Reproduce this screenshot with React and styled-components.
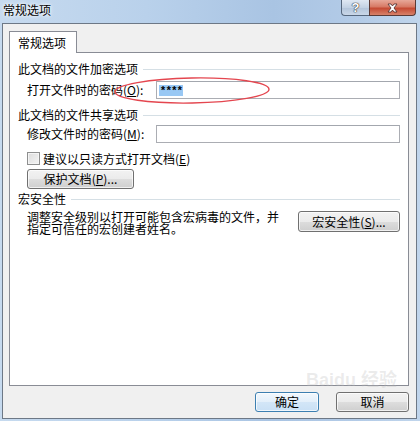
import React from "react";
import styled, { createGlobalStyle } from "styled-components";

const GlobalStyle = createGlobalStyle`
  body {
    margin: 0;
    font-family: "Noto Sans CJK SC", "Liberation Sans", sans-serif;
    font-size: 12px;
    color: #000;
  }
`;

const Window = styled.div`
  position: relative;
  width: 420px;
  height: 421px;
  display: flex;
  flex-direction: column;
  overflow: hidden;
  background: linear-gradient(
    90deg,
    #c6daef 0%,
    #b9d1eb 35%,
    #a9c4e3 65%,
    #b3cbe7 85%,
    #c0d5ec 100%
  );
`;

const TitleBar = styled.div`
  height: 23px;
  flex: none;
  display: flex;
  justify-content: space-between;
  align-items: flex-start;
  padding-left: 3px;
`;

const Title = styled.span`
  margin-top: 4px;
  font-size: 12px;
  line-height: 12px;
  text-shadow: 0 0 5px #fff, 0 0 3px #fff;
`;

const CaptionButtons = styled.div`
  display: flex;
  margin-right: 4px;
`;

const HelpButton = styled.div`
  width: 27px;
  height: 15px;
  border: 1px solid #56687e;
  border-top: none;
  border-right: none;
  border-radius: 0 0 0 4px;
  background: linear-gradient(#dfe8f3, #c3d2e4 50%, #b2c4da 51%, #c9d7e8);
  display: flex;
  justify-content: center;
  align-items: center;
  color: #fff;
  font-family: "Liberation Sans", sans-serif;
  font-weight: bold;
  font-size: 13px;
  line-height: 13px;
  text-shadow: 0 0 1px #333, 0 0 1px #333, 0 0 1px #333;
`;

const CloseButton = styled.div`
  width: 45px;
  height: 15px;
  border: 1px solid #5a3a36;
  border-top: none;
  border-radius: 0 0 4px 0;
  background: linear-gradient(#e7a899, #d77a65 45%, #c54a33 55%, #d7826a);
  display: flex;
  justify-content: center;
  align-items: center;
`;

const Body = styled.div`
  flex: 1;
  margin: 0 3px 2px 2px;
  border: 1px solid #6d7886;
  background: #f0f0f0;
  display: flex;
  flex-direction: column;
  padding: 7px 7px 0 6px;
`;

const TabStrip = styled.div`
  display: flex;
`;

const Tab = styled.div`
  width: 58px;
  height: 21px;
  border: 1px solid #898c95;
  border-bottom: none;
  background: #fff;
  margin-bottom: -1px;
  position: relative;
  z-index: 1;
  padding-left: 8px;
  display: flex;
  align-items: center;
  line-height: 12px;
`;

const Panel = styled.div`
  height: 332px;
  border: 1px solid #898c95;
  background: #fff;
  padding: 0 8px;
  display: flex;
  flex-direction: column;
`;

const GroupHeader = styled.div`
  display: flex;
  align-items: center;
  height: 12px;
  line-height: 12px;
  margin-top: ${(p) => p.$top}px;
`;

const GroupLine = styled.div`
  flex: 1;
  height: 1px;
  margin-left: 5px;
  background: #d5dfe5;
`;

const Row = styled.div`
  display: flex;
  align-items: center;
  padding-left: 9px;
  margin-top: ${(p) => p.$top}px;
  line-height: 12px;
`;

const Label = styled.span`
  width: 129px;
  flex: none;
`;

const TextInput = styled.div`
  width: 240px;
  height: 16px;
  border: 1px solid #abadb3;
  border-top-color: #a3a7ae;
  background: #fff;
  display: flex;
  align-items: center;
  padding-left: 2px;
`;

const Selection = styled.span`
  display: inline-block;
  width: 24px;
  height: 11px;
  background: #99c8f4;
  font-family: "Liberation Mono", monospace;
  font-weight: bold;
  font-size: 11px;
  line-height: 13px;
  text-align: center;
  letter-spacing: -1px;
`;

const CheckBox = styled.span`
  width: 11px;
  height: 11px;
  border: 1px solid #8e8f8f;
  background: linear-gradient(135deg, #dcdcdc, #f4f4f4);
  box-shadow: inset 0 0 0 1px #f4f4f4;
  margin-right: 3px;
  flex: none;
`;

const Button = styled.div`
  width: ${(p) => p.$w}px;
  height: ${(p) => p.$h || 20}px;
  box-sizing: border-box;
  border: 1px solid ${(p) => (p.$default ? "#3c7fb1" : "#707070")};
  border-radius: 3px;
  background: ${(p) =>
    p.$default
      ? "linear-gradient(#f2f8fd, #e3effa 50%, #d3e6f7 51%, #c9e0f5)"
      : "linear-gradient(#f2f2f2, #ebebeb 50%, #dddddd 51%, #cfcfcf)"};
  box-shadow: inset 0 0 0 1px rgba(255, 255, 255, 0.7);
  display: flex;
  align-items: center;
  justify-content: center;
  line-height: 12px;
  flex: none;
`;

const ProtectButton = styled(Button)`
  margin-left: 9px;
  margin-top: 4px;
`;

const MacroRow = styled.div`
  display: flex;
  justify-content: space-between;
  align-items: flex-start;
  padding-left: 9px;
  margin-top: 6px;
`;

const MacroText = styled.p`
  margin: 0;
  width: 256px;
  line-height: 12px;
`;

const Footer = styled.div`
  display: flex;
  justify-content: flex-end;
  gap: 17px;
  margin-top: 6px;
`;

const Annotation = styled.svg`
  position: absolute;
  left: 0;
  top: 0;
  pointer-events: none;
`;

const Watermark = styled.div`
  position: absolute;
  left: 306px;
  top: 371px;
  color: rgba(185, 185, 185, 0.28);
  font-family: "Liberation Sans", "Noto Sans CJK SC", sans-serif;
  font-size: 18px;
  font-weight: bold;
  line-height: 18px;
  pointer-events: none;
`;

function Key({ k }) {
  return (
    <>
      (<u>{k}</u>)
    </>
  );
}

function App() {
  return (
    <Window>
      <GlobalStyle />
      <TitleBar>
        <Title>常规选项</Title>
        <CaptionButtons>
          <HelpButton>?</HelpButton>
          <CloseButton>
            <svg width="11" height="10" viewBox="0 0 11 10">
              <path
                d="M1 1h3l1.5 2L7 1h3L7 5l3 4H7L5.5 7 4 9H1l3-4z"
                fill="#fff"
                stroke="#4a2a28"
                strokeWidth="0.8"
              />
            </svg>
          </CloseButton>
        </CaptionButtons>
      </TitleBar>

      <Body>
        <TabStrip>
          <Tab>常规选项</Tab>
        </TabStrip>
        <Panel>
          <GroupHeader $top={10}>
            此文档的文件加密选项
            <GroupLine />
          </GroupHeader>
          <Row $top={6}>
            <Label>
              打开文件时的密码<Key k="O" />:
            </Label>
            <TextInput>
              <Selection>****</Selection>
            </TextInput>
          </Row>

          <GroupHeader $top={10}>
            此文档的文件共享选项
            <GroupLine />
          </GroupHeader>
          <Row $top={4}>
            <Label>
              修改文件时的密码<Key k="M" />:
            </Label>
            <TextInput />
          </Row>
          <Row $top={9}>
            <CheckBox />
            建议以只读方式打开文档<Key k="E" />
          </Row>
          <ProtectButton $w={107}>
            保护文档<Key k="P" />...
          </ProtectButton>

          <GroupHeader $top={4}>
            宏安全性
            <GroupLine />
          </GroupHeader>
          <MacroRow>
            <MacroText>
              调整安全级别以打开可能包含宏病毒的文件，并指定可信任的宏创建者姓名。
            </MacroText>
            <Button $w={102} $h={21}>
              宏安全性<Key k="S" />...
            </Button>
          </MacroRow>
        </Panel>
        <Footer>
          <Button $w={64} $default>
            确定
          </Button>
          <Button $w={73}>取消</Button>
        </Footer>
      </Body>

      <Annotation width="420" height="421">
        <ellipse
          cx="192"
          cy="90.5"
          rx="77"
          ry="12.5"
          fill="none"
          stroke="#e4464f"
          strokeWidth="1.4"
          transform="rotate(-1 192 90.5)"
        />
      </Annotation>
      <Watermark>Baidu 经验</Watermark>
    </Window>
  );
}

export default App;
